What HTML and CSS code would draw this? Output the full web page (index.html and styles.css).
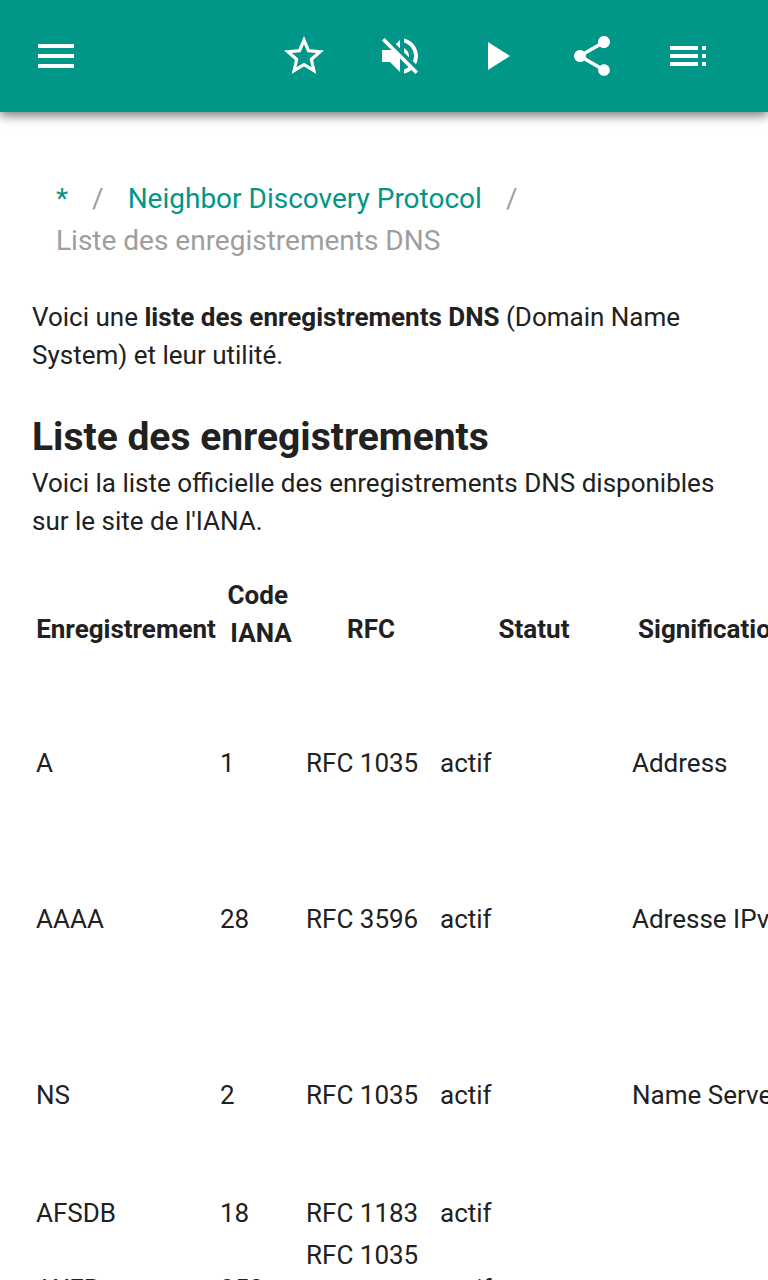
FILE: index.html
```html
<!DOCTYPE html>
<html lang="fr">
<head>
  <meta charset="UTF-8">
  <meta name="viewport" content="width=device-width, initial-scale=1.0">
  <title>Liste des enregistrements DNS</title>
  <link rel="stylesheet" href="styles.css">
</head>
<body>
  <header class="toolbar">
    <button class="icon-button menu" type="button" aria-label="Menu">
      <svg viewBox="0 0 24 24"><path d="M3 18h18v-2H3v2zm0-5h18v-2H3v2zm0-7v2h18V6H3z"/></svg>
    </button>
    <button class="icon-button" type="button" aria-label="Favori">
      <svg viewBox="0 0 24 24"><path d="M22 9.24l-7.19-.62L12 2 9.19 8.63 2 9.24l5.46 4.73L5.82 21 12 17.27 18.18 21l-1.63-7.03L22 9.24zM12 15.4l-3.76 2.27 1-4.28-3.32-2.88 4.38-.38L12 6.1l1.71 4.04 4.38.38-3.32 2.88 1 4.28L12 15.4z"/></svg>
    </button>
    <button class="icon-button" type="button" aria-label="Son">
      <svg viewBox="0 0 24 24"><path d="M16.500 12c0-1.770-1.020-3.290-2.500-4.030v2.210l2.450 2.450c.03-.2.050-.41.050-.63zm2.500 0c0 .94-.2 1.820-.54 2.640l1.510 1.510C20.630 14.910 21 13.500 21 12c0-4.280-2.990-7.860-7-8.770v2.060c2.890.86 5 3.540 5 6.710zM4.270 3L3 4.270 7.730 9H3v6h4l5 5v-6.730l4.250 4.250c-.67.52-1.420.93-2.250 1.180v2.060c1.380-.31 2.630-.95 3.690-1.810L19.730 21 21 19.730l-9-9L4.270 3zM12 4L9.910 6.090 12 8.180V4z"/></svg>
    </button>
    <button class="icon-button" type="button" aria-label="Lecture">
      <svg viewBox="0 0 24 24"><path d="M8 5v14l11-7z"/></svg>
    </button>
    <button class="icon-button" type="button" aria-label="Partager">
      <svg viewBox="0 0 24 24"><path d="M18 16.080c-.76 0-1.440.3-1.960.77L8.910 12.700c.05-.23.090-.46.090-.7s-.04-.47-.09-.7l7.050-4.110c.54.5 1.250.81 2.040.81 1.660 0 3-1.340 3-3s-1.340-3-3-3-3 1.340-3 3c0 .24.040.47.090.7L8.040 9.810C7.500 9.310 6.790 9 6 9c-1.660 0-3 1.340-3 3s1.340 3 3 3c.79 0 1.500-.31 2.040-.81l7.120 4.160c-.05.21-.08.43-.08.65 0 1.610 1.310 2.920 2.920 2.920s2.920-1.310 2.920-2.920-1.310-2.920-2.920-2.920z"/></svg>
    </button>
    <button class="icon-button" type="button" aria-label="Sommaire">
      <svg viewBox="0 0 24 24"><path d="M3 9h14V7H3v2zm0 4h14v-2H3v2zm0 4h14v-2H3v2zm16 0h2v-2h-2v2zm0-10v2h2V7h-2zm0 6h2v-2h-2v2z"/></svg>
    </button>
  </header>

  <main class="content">
    <nav class="breadcrumb">
      <a href="#">*</a>
      <span class="separator">/</span>
      <a href="#">Neighbor Discovery Protocol</a>
      <span class="separator">/</span>
      <span class="current">Liste des enregistrements DNS</span>
    </nav>

    <p>Voici une <b>liste des enregistrements DNS</b> (Domain Name System) et leur utilité.</p>

    <h2>Liste des enregistrements</h2>
    <p>Voici la liste officielle des enregistrements DNS disponibles sur le site de l'IANA.</p>

    <table class="records">
      <colgroup>
        <col class="col-name">
        <col class="col-code">
        <col class="col-rfc">
        <col class="col-status">
        <col class="col-meaning">
      </colgroup>
      <thead>
        <tr>
          <th>Enregistrement</th>
          <th class="code">Code&nbsp;<br>IANA</th>
          <th>RFC</th>
          <th>Statut</th>
          <th class="meaning">Signification</th>
        </tr>
      </thead>
      <tbody>
        <tr class="tall">
          <td>A</td><td>1</td><td>RFC 1035</td><td>actif</td><td>Address</td>
        </tr>
        <tr class="tall">
          <td>AAAA</td><td>28</td><td>RFC 3596</td><td>actif</td><td>Adresse IPv6</td>
        </tr>
        <tr class="taller">
          <td>NS</td><td>2</td><td>RFC 1035</td><td>actif</td><td>Name Server</td>
        </tr>
        <tr class="short">
          <td>AFSDB</td><td>18</td><td>RFC 1183</td><td>actif</td><td></td>
        </tr>
        <tr class="last">
          <td>AXFR</td><td>252</td><td class="rfc-list">RFC 1035</td><td>actif</td><td></td>
        </tr>
      </tbody>
    </table>
  </main>
</body>
</html>
```
FILE: styles.css
```css
body {
  margin: 0;
  height: 1280px;
  overflow: hidden;
  background-color: #fff;
  color: #212121;
  font-family: Roboto, sans-serif;
  font-size: 26px;
  line-height: 38px;
}
.toolbar {
  display: flex;
  align-items: center;
  height: 112px;
  padding: 0 32px;
  box-sizing: border-box;
  background-color: #009688;
  box-shadow: 0 4px 10px rgba(0, 0, 0, 0.5);
}
.icon-button {
  width: 96px;
  height: 96px;
  padding: 24px;
  border: none;
  background: none;
  cursor: pointer;
}
.icon-button svg {
  display: block;
  width: 48px;
  height: 48px;
  fill: #fff;
}
.menu {
  width: 48px;
  padding: 24px 0;
  margin-right: auto;
}
.content {
  padding: 66px 32px 0;
}
.breadcrumb {
  display: flex;
  flex-wrap: wrap;
  padding: 0 24px;
  margin-bottom: 36px;
  font-size: 28px;
  line-height: 42px;
  color: #9e9e9e;
}
.breadcrumb a {
  color: #009688;
  text-decoration: none;
}
.separator {
  padding: 0 24px;
}
p {
  margin: 0;
}
h2 {
  margin: 36px 0 0;
  font-size: 39px;
  line-height: 54px;
}
.records {
  width: 820px;
  margin-top: 36px;
  table-layout: fixed;
  border-collapse: collapse;
}
.col-name {
  width: 184px;
}
.col-code {
  width: 86px;
}
.col-rfc {
  width: 134px;
}
.col-status {
  width: 192px;
}
.records th, .records td {
  padding: 0 0 0 4px;
  white-space: nowrap;
}
.records th {
  height: 75px;
  padding-top: 34px;
  vertical-align: top;
}
.records th.code {
  padding-top: 0;
}
.records th.meaning {
  padding-left: 10px;
  text-align: left;
}
.records td {
  vertical-align: middle;
}
.tall {
  height: 156px;
}
.taller {
  height: 196px;
}
.short {
  height: 40px;
}
.last {
  height: 112px;
}
.records .rfc-list {
  padding-top: 3px;
  vertical-align: top;
}
```
